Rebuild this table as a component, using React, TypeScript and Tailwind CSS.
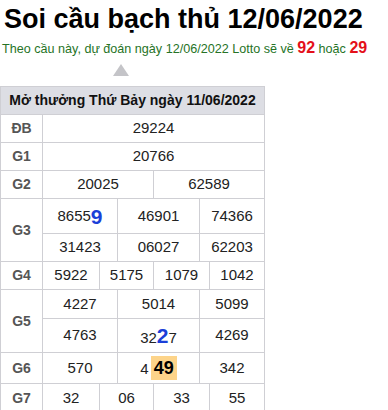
import type { ReactNode } from "react";

const F = { fontFamily: '"Liberation Sans", Arial, sans-serif' };

function Cell({ w, h, children, last }: { w: number; h: number; children?: ReactNode; last?: boolean }) {
  return (
    <div
      className={`flex items-center justify-center text-[15px] text-[#222] border-b border-[#cfcfd4] ${last ? "" : "border-r"}`}
      style={{ width: w, height: h }}
    >
      {children}
    </div>
  );
}

function Label({ h, children }: { h: number; children: ReactNode }) {
  return (
    <div
      className="flex w-[42px] shrink-0 items-center justify-center border-r border-b border-[#cfcfd4] text-[14px] font-bold text-[#555]"
      style={{ height: h }}
    >
      {children}
    </div>
  );
}

const Big = ({ children }: { children: ReactNode }) => (
  <b className="text-[21px] leading-none text-[#1b3fd8]">{children}</b>
);

export default function App() {
  const w3 = [75, 82, 65];
  const w4 = [57, 54, 56, 55];
  const w2 = [111, 111];
  return (
    <div className="h-[410px] w-[388px] overflow-hidden bg-white" style={F}>
      <h1 className="whitespace-nowrap pl-[4px] pt-[1px] text-[27px] font-bold leading-[36px] text-black">
        Soi cầu bạch thủ 12/06/2022
      </h1>
      <p className="mt-[1px] whitespace-nowrap pl-[2px] text-[12.6px] leading-[20px] text-[#267326]">
        Theo cầu này, dự đoán ngày 12/06/2022 Lotto sẽ về{" "}
        <b className="text-[16px] text-[#e4101a]">92</b> hoặc{" "}
        <b className="text-[16px] text-[#e4101a]">29</b>
      </p>
      <div className="mt-[5px] flex h-[12px] pl-[113px]">
        <div className="h-0 w-0 border-x-[8px] border-b-[12px] border-x-transparent border-b-[#c4c4c8]" />
      </div>
      <div className="mt-[10px] w-[265px] border-l border-t border-[#cfcfd4]">
        <div className="flex h-[28px] items-center justify-center whitespace-nowrap border-r border-b border-[#cfcfd4] bg-[#dddee4] text-[14px] font-bold text-[#111]">
          Mở thưởng Thứ Bảy ngày 11/06/2022
        </div>
        <div className="flex">
          <Label h={28}>ĐB</Label>
          <Cell w={222} h={28}>29224</Cell>
        </div>
        <div className="flex">
          <Label h={28}>G1</Label>
          <Cell w={222} h={28}>20766</Cell>
        </div>
        <div className="flex">
          <Label h={28}>G2</Label>
          <Cell w={w2[0]} h={28}>20025</Cell>
          <Cell w={w2[1]} h={28}>62589</Cell>
        </div>
        <div className="flex">
          <Label h={63}>G3</Label>
          <div className="flex flex-col">
            <div className="flex">
              <Cell w={w3[0]} h={35}>
                8655<Big>9</Big>
              </Cell>
              <Cell w={w3[1]} h={35}>46901</Cell>
              <Cell w={w3[2]} h={35}>74366</Cell>
            </div>
            <div className="flex">
              <Cell w={w3[0]} h={28}>31423</Cell>
              <Cell w={w3[1]} h={28}>06027</Cell>
              <Cell w={w3[2]} h={28}>62203</Cell>
            </div>
          </div>
        </div>
        <div className="flex">
          <Label h={28}>G4</Label>
          <Cell w={w4[0]} h={28}>5922</Cell>
          <Cell w={w4[1]} h={28}>5175</Cell>
          <Cell w={w4[2]} h={28}>1079</Cell>
          <Cell w={w4[3]} h={28}>1042</Cell>
        </div>
        <div className="flex">
          <Label h={63}>G5</Label>
          <div className="flex flex-col">
            <div className="flex">
              <Cell w={w3[0]} h={29}>4227</Cell>
              <Cell w={w3[1]} h={29}>5014</Cell>
              <Cell w={w3[2]} h={29}>5099</Cell>
            </div>
            <div className="flex">
              <Cell w={w3[0]} h={34}>4763</Cell>
              <Cell w={w3[1]} h={34}>
                <span className="pt-[5px]">32</span>
                <Big>2</Big>
                <span className="pt-[5px]">7</span>
              </Cell>
              <Cell w={w3[2]} h={34}>4269</Cell>
            </div>
          </div>
        </div>
        <div className="flex">
          <Label h={31}>G6</Label>
          <Cell w={w3[0]} h={31}>570</Cell>
          <Cell w={w3[1]} h={31}>
            <span className="mr-[2px] pt-[2px]">4</span>
            <b className="flex h-[24px] items-center bg-[#fdd48a] px-[3px] text-[18px] text-black">49</b>
          </Cell>
          <Cell w={w3[2]} h={31}>342</Cell>
        </div>
        <div className="flex">
          <Label h={30}>G7</Label>
          <Cell w={w4[0]} h={30}>32</Cell>
          <Cell w={w4[1]} h={30}>06</Cell>
          <Cell w={w4[2]} h={30}>33</Cell>
          <Cell w={w4[3]} h={30}>55</Cell>
        </div>
      </div>
    </div>
  );
}
